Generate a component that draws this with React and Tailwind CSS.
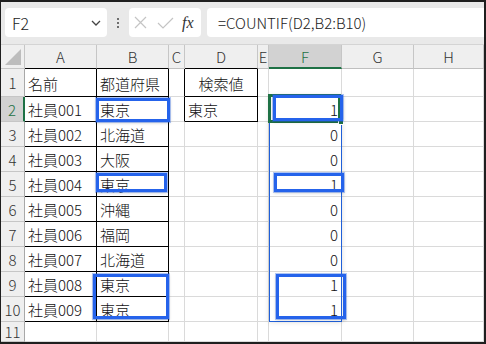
import React from "react";

const cols = ["A", "B", "C", "D", "E", "F", "G", "H"];

const names = ["社員001", "社員002", "社員003", "社員004", "社員005", "社員006", "社員007", "社員008", "社員009"];
const prefs = ["東京", "北海道", "大阪", "東京", "沖縄", "福岡", "北海道", "東京", "東京"];
const counts = [1, 0, 0, 1, 0, 0, 0, 1, 1];

function cellText(r, c) {
  // r: 1..11, c: 0..7 (A..H)
  if (r === 1) {
    if (c === 0) return "名前";
    if (c === 1) return "都道府県";
    if (c === 3) return "検索値";
    return "";
  }
  if (r >= 2 && r <= 10) {
    if (c === 0) return names[r - 2];
    if (c === 1) return prefs[r - 2];
    if (c === 5) return String(counts[r - 2]);
    if (c === 3 && r === 2) return "東京";
  }
  return "";
}

function cellBorder(r, c) {
  // black borders around A1:B10 and D1:D2
  const inAB = r >= 1 && r <= 10 && (c === 0 || c === 1);
  const inD = r >= 1 && r <= 2 && c === 3;
  const leftOfD = r >= 1 && r <= 2 && c === 2;
  const right = inAB || inD || leftOfD ? "border-r-black" : "border-r-[#dadada]";
  const bottom = inAB || inD ? "border-b-black" : "border-b-[#dadada]";
  return `${right} ${bottom}`;
}

export default function App() {
  const rows = [1, 2, 3, 4, 5, 6, 7, 8, 9, 10, 11];

  return (
    <div
      className="relative w-[486px] h-[344px] overflow-hidden bg-[#1f1f1f] pt-[2px] pl-[1px] pr-[2px] pb-[2px]"
      style={{ fontFamily: '"Noto Sans CJK JP", "Noto Sans", sans-serif' }}
    >
      <div className="flex flex-col w-full h-full bg-white overflow-hidden">
        {/* Formula bar */}
        <div className="flex items-start h-[43px] bg-[#e9e9e9] pt-[6px] pl-[4px] border-b border-[#d4d4d4]">
          <div className="flex items-center justify-between w-[102px] h-[29px] bg-white rounded-[4px] pl-[7px] pr-[6px]">
            <span className="text-[16px] font-light text-[#222] leading-none">F2</span>
            <svg width="10" height="6" viewBox="0 0 10 6" fill="none">
              <path d="M1 1l4 4 4-4" stroke="#444" strokeWidth="1.3" />
            </svg>
          </div>
          <div className="flex flex-col items-center justify-center gap-[2px] w-[22px] h-[29px]">
            <span className="block w-[2px] h-[2px] bg-[#444] rounded-full" />
            <span className="block w-[2px] h-[2px] bg-[#444] rounded-full" />
            <span className="block w-[2px] h-[2px] bg-[#444] rounded-full" />
          </div>
          <div className="flex items-center w-[72px] h-[29px] bg-white rounded-[4px] pl-[5px]">
            <svg width="13" height="13" viewBox="0 0 13 13" fill="none">
              <path d="M1 1l11 11M12 1L1 12" stroke="#c4c4c4" strokeWidth="1.2" />
            </svg>
            <svg className="ml-[10px]" width="17" height="12" viewBox="0 0 17 12" fill="none">
              <path d="M1 6l5 5L16 1" stroke="#c4c4c4" strokeWidth="1.2" />
            </svg>
            <span
              className="ml-[8px] text-[16px] italic text-[#333] leading-none"
              style={{ fontFamily: '"Liberation Serif", "DejaVu Serif", serif' }}
            >
              fx
            </span>
          </div>
          <div className="flex items-center flex-1 h-[29px] ml-[6px] bg-white rounded-l-[4px] pl-[11px]">
            <span className="text-[15px] font-light text-[#222] leading-none">=COUNTIF(D2,B2:B10)</span>
          </div>
        </div>

        {/* Grid */}
        <div className="grid grid-cols-[24px_72px_72px_16px_73px_11px_73px_72px_70px] grid-rows-[24px_28px_repeat(9,25px)_20px] text-[15px] font-light leading-none">
          {/* corner */}
          <div className="relative bg-[#efefef] border-r border-b border-[#c6c6c6]">
            <div className="absolute left-[4px] top-[4px] w-0 h-0 border-l-[16px] border-l-transparent border-b-[16px] border-b-[#bdbdbd]" />
          </div>
          {cols.map((c, i) => {
            const active = c === "F";
            const blackBottom = i === 0 || i === 1 || i === 3;
            return (
              <div
                key={c}
                className={`flex items-center justify-center border-r border-r-[#c6c6c6] ${
                  active
                    ? "bg-[#d2d2d2] text-[#1e7145] border-b-2 border-b-[#1e7145]"
                    : `bg-[#efefef] text-[#333] border-b ${blackBottom ? "border-b-black" : "border-b-[#bfbfbf]"}`
                }`}
              >
                {c}
              </div>
            );
          })}

          {rows.map((r) => (
            <React.Fragment key={r}>
              <div
                className={`flex items-center justify-center border-b border-b-[#c6c6c6] ${
                  r === 2
                    ? "bg-[#d2d2d2] text-[#1e7145] border-r-2 border-r-[#1e7145]"
                    : "bg-[#efefef] text-[#333] border-r border-r-[#a8a8a8]"
                }`}
              >
                {r}
              </div>
              {cols.map((c, i) => {
                const t = cellText(r, i);
                const align =
                  i === 5 ? "justify-end pr-[3px]" : r === 1 && i === 3 ? "justify-center" : "justify-start pl-[3px]";
                return (
                  <div
                    key={c}
                    className={`flex items-center pt-[1px] border-r border-b text-[#111] ${align} ${cellBorder(r, i)}`}
                  >
                    {t}
                  </div>
                );
              })}
            </React.Fragment>
          ))}
        </div>
      </div>

      {/* F2:F10 reference range */}
      <div className="absolute left-[269px] top-[96px] w-[73px] h-[226px] border border-[#1f5fd8] shadow-[0_0_5px_rgba(0,0,0,0.15)]" />

      {/* active cell F2 */}
      <div className="absolute left-[268px] top-[94px] w-[73px] h-[29px] border-[3px] border-[#1e7145]" />
      <div className="absolute left-[338px] top-[119px] w-[6px] h-[6px] bg-[#1e7145] border border-white" />

      {/* highlight boxes */}
      <div className="absolute left-[96px] top-[98px] w-[74px] h-[24px] border-[3px] border-[#2563eb] shadow-[0_0_0_1px_rgba(37,99,235,0.35),0_1px_3px_rgba(0,0,0,0.2)]" />
      <div className="absolute left-[96px] top-[173px] w-[71px] h-[19px] border-[3px] border-[#2563eb] shadow-[0_0_0_1px_rgba(37,99,235,0.35),0_1px_3px_rgba(0,0,0,0.2)]" />
      <div className="absolute left-[93px] top-[274px] w-[76px] h-[45px] border-[3px] border-[#2563eb] shadow-[0_0_0_1px_rgba(37,99,235,0.35),0_1px_3px_rgba(0,0,0,0.2)]" />
      <div className="absolute left-[273px] top-[95px] w-[70px] h-[26px] border-[3px] border-[#2563eb] shadow-[0_0_0_1px_rgba(37,99,235,0.35),0_1px_3px_rgba(0,0,0,0.2)]" />
      <div className="absolute left-[274px] top-[173px] w-[70px] h-[19px] border-[3px] border-[#2563eb] shadow-[0_0_0_1px_rgba(37,99,235,0.35),0_1px_3px_rgba(0,0,0,0.2)]" />
      <div className="absolute left-[276px] top-[274px] w-[70px] h-[45px] border-[3px] border-[#2563eb] shadow-[0_0_0_1px_rgba(37,99,235,0.35),0_1px_3px_rgba(0,0,0,0.2)]" />
    </div>
  );
}
